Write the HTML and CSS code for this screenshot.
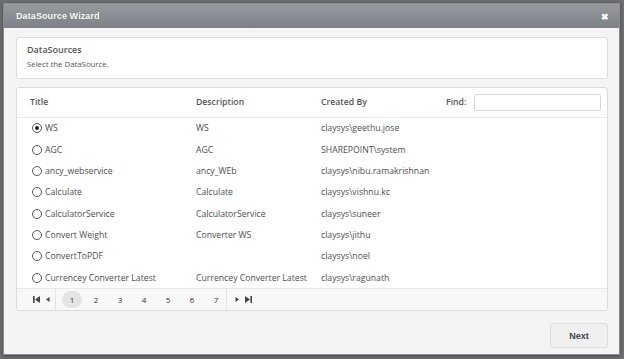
FILE: index.html
```html
<!DOCTYPE html>
<html lang="en">
<head>
  <meta charset="UTF-8">
  <title>DataSource Wizard</title>
  <link rel="stylesheet" href="styles.css">
</head>
<body>
  <div class="dialog">
    <div class="dialog-header">
      <span class="dialog-title">DataSource Wizard</span>
      <span class="close">&#10006;</span>
    </div>
    <div class="dialog-body">
      <div class="panel intro">
        <div class="intro-title">DataSources</div>
        <div class="intro-text">Select the DataSource.</div>
      </div>

      <div class="panel grid-panel">
        <div class="row head">
          <div>Title</div>
          <div>Description</div>
          <div>Created By</div>
          <div class="find">Find: <input type="text"></div>
        </div>
        <div class="row"><div class="cell-title"><span class="radio checked"></span>WS</div><div>WS</div><div>claysys\geethu.jose</div></div>
        <div class="row"><div class="cell-title"><span class="radio"></span>AGC</div><div>AGC</div><div>SHAREPOINT\system</div></div>
        <div class="row"><div class="cell-title"><span class="radio"></span>ancy_webservice</div><div>ancy_WEb</div><div>claysys\nibu.ramakrishnan</div></div>
        <div class="row"><div class="cell-title"><span class="radio"></span>Calculate</div><div>Calculate</div><div>claysys\vishnu.kc</div></div>
        <div class="row"><div class="cell-title"><span class="radio"></span>CalculatorService</div><div>CalculatorService</div><div>claysys\suneer</div></div>
        <div class="row"><div class="cell-title"><span class="radio"></span>Convert Weight</div><div>Converter WS</div><div>claysys\jithu</div></div>
        <div class="row"><div class="cell-title"><span class="radio"></span>ConvertToPDF</div><div></div><div>claysys\noel</div></div>
        <div class="row"><div class="cell-title"><span class="radio"></span>Currencey Converter Latest</div><div>Currencey Converter Latest</div><div>claysys\ragunath</div></div>

        <div class="pager">
          <div class="pager-nav">
            <svg width="8" height="7" viewBox="0 0 8 7"><rect x="0" y="0" width="1.6" height="7" fill="#444"/><path d="M7 0 L2 3.5 L7 7 Z" fill="#444"/></svg>
            <svg width="5" height="7" viewBox="0 0 5 7"><path d="M4.5 1 L1 3.5 L4.5 6 Z" fill="#444"/></svg>
          </div>
          <div class="pages">
            <span class="page current">1</span>
            <span class="page">2</span>
            <span class="page">3</span>
            <span class="page">4</span>
            <span class="page">5</span>
            <span class="page">6</span>
            <span class="page">7</span>
          </div>
          <div class="pager-nav">
            <svg width="5" height="7" viewBox="0 0 5 7"><path d="M0.5 1 L4 3.5 L0.5 6 Z" fill="#444"/></svg>
            <svg width="8" height="7" viewBox="0 0 8 7"><path d="M1 0 L6 3.5 L1 7 Z" fill="#444"/><rect x="6.4" y="0" width="1.6" height="7" fill="#444"/></svg>
          </div>
        </div>
      </div>
    </div>
    <div class="dialog-footer">
      <button class="next">Next</button>
    </div>
  </div>
</body>
</html>
```

FILE: styles.css
```css
html, body {
  margin: 0;
  height: 100%;
}

body {
  background: #6f7073;
  padding: 3px 4px 0 3px;
  box-sizing: border-box;
  font-family: "Open Sans", Arial, sans-serif;
  color: #555;
}

.dialog {
  height: 352px;
  background: #f4f4f4;
  border: 1px solid #8a8d92;
  box-sizing: border-box;
  display: flex;
  flex-direction: column;
  box-shadow: 0 1px 4px rgba(0, 0, 0, 0.4);
}

.dialog-header {
  height: 24px;
  background: linear-gradient(#979a9f, #7d8086);
  display: flex;
  align-items: center;
  justify-content: space-between;
  padding: 0 10px 0 12px;
}

.dialog-title {
  color: #fff;
  font-family: "Liberation Sans", Arial, sans-serif;
  font-weight: bold;
  font-size: 9px;
  letter-spacing: 0.1px;
  text-shadow: 0 0 1px rgba(0, 0, 0, 0.3);
}

.close {
  color: #fff;
  font-size: 9px;
  font-weight: bold;
}

.dialog-body {
  padding: 9px 11px 0 12px;
  display: flex;
  flex-direction: column;
  gap: 8px;
}

.panel {
  background: #fff;
  border: 1px solid #dcdcdc;
  border-radius: 3px;
}

.intro {
  height: 42px;
  box-sizing: border-box;
  padding: 5px 10px;
}

.intro-title {
  font-weight: 600;
  font-size: 9px;
  color: #555;
}

.intro-text {
  font-size: 7.8px;
  color: #555;
  margin-top: 3px;
}

.grid-panel {
  height: 224px;
  box-sizing: border-box;
  display: flex;
  flex-direction: column;
}

.row {
  display: grid;
  grid-template-columns: 166px 125px 125px minmax(0, 1fr);
  align-items: center;
  height: 21.6px;
  padding-left: 13px;
  font-size: 8.7px;
  color: #4e4e4e;
  white-space: nowrap;
}

.row.head {
  height: 29px;
  border-bottom: 1px solid #e6e6e6;
  font-weight: 600;
  font-size: 8.7px;
  color: #555;
}

.find {
  display: flex;
  align-items: center;
  gap: 8px;
}

.find input {
  width: 127px;
  height: 17px;
  box-sizing: border-box;
  border: 1px solid #d8d8d8;
  border-radius: 2px;
  padding: 0;
  margin: 0;
}

.cell-title {
  display: flex;
  align-items: center;
  padding-left: 2px;
}

.radio {
  width: 10px;
  height: 10px;
  border: 1px solid #555;
  border-radius: 50%;
  margin-right: 3px;
  box-sizing: border-box;
  display: inline-block;
  position: relative;
}

.radio.checked::after {
  content: "";
  position: absolute;
  left: 2px;
  top: 2px;
  width: 4px;
  height: 4px;
  border-radius: 50%;
  background: #222;
}

.pager {
  margin-top: auto;
  height: 21px;
  background: #f8f8f8;
  border-top: 1px solid #e6e6e6;
  border-radius: 0 0 3px 3px;
  display: flex;
  align-items: center;
  font-size: 8px;
  color: #333;
}

.pager-nav {
  display: flex;
  align-items: center;
  gap: 4px;
  padding: 0 5px 0 16px;
  height: 100%;
}

.pager-nav:first-child {
  border-right: 1px solid #e4e4e4;
}

.pager-nav:last-child {
  border-left: 1px solid #e4e4e4;
  padding: 0 0 0 8px;
}

.pages {
  display: flex;
  align-items: center;
  padding: 0 0 0 6px;
}

.page {
  width: 20px;
  height: 17px;
  margin-right: 4px;
  display: flex;
  align-items: center;
  justify-content: center;
}

.page:last-child {
  margin-right: 0;
}

.page.current {
  background: #e4e4e4;
  border-radius: 9px;
}

.dialog-footer {
  margin-top: auto;
  display: flex;
  justify-content: flex-end;
  padding: 0 11px 6px 0;
}

.next {
  width: 58px;
  height: 25px;
  background: #f0f0f0;
  border: 1px solid #dcdcdc;
  border-radius: 3px;
  font-family: "Liberation Sans", Arial, sans-serif;
  font-weight: bold;
  font-size: 9px;
  color: #3f4550;
}
```
